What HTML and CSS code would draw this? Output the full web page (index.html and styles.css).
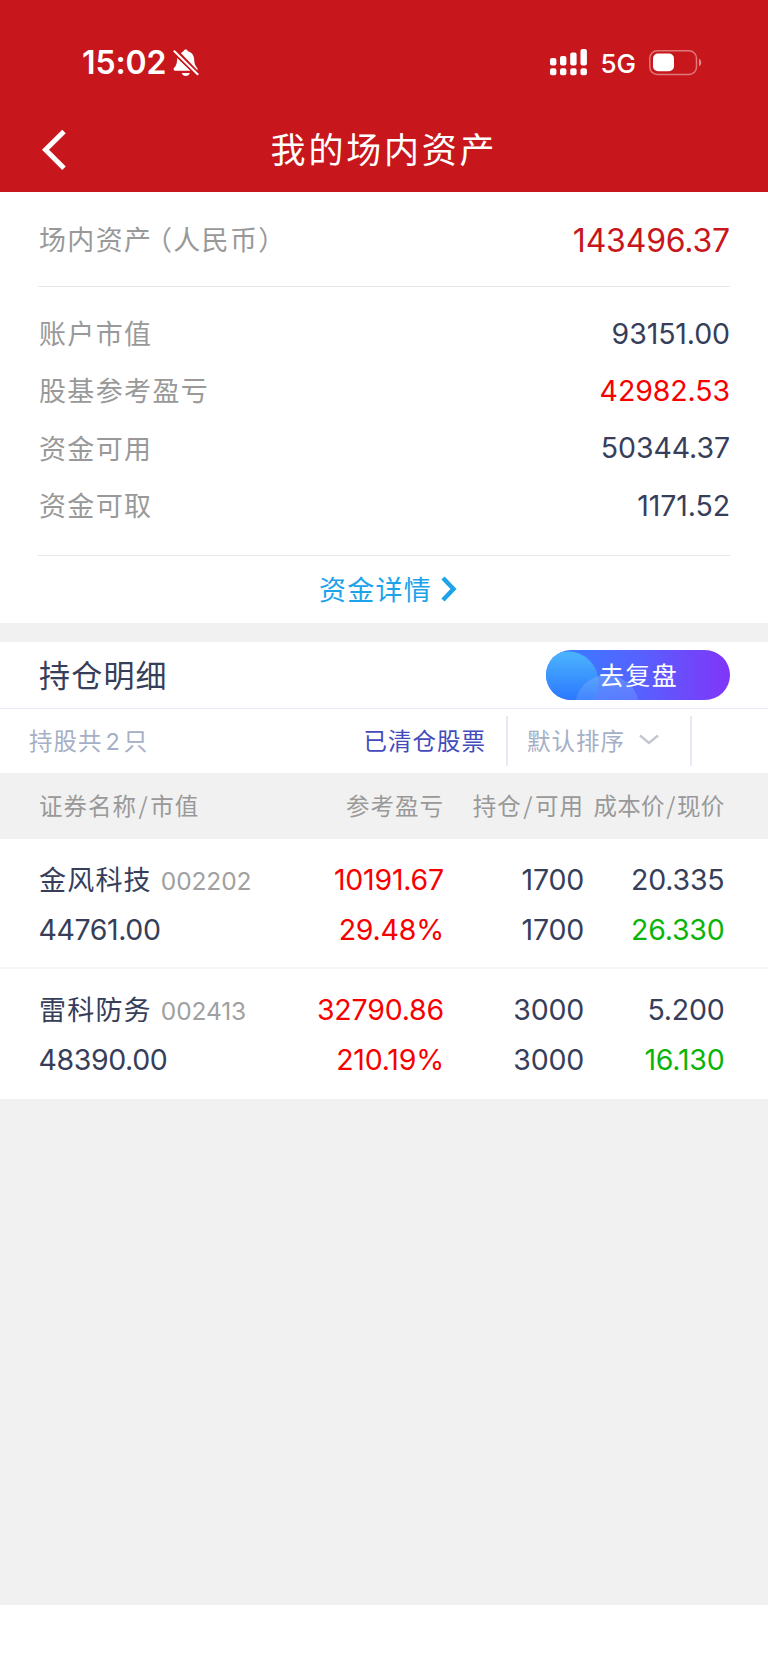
FILE: index.html
```
<!DOCTYPE html>
<html lang="zh-CN">
<head>
<meta charset="utf-8">
<title>我的场内资产</title>
<link rel="stylesheet" href="styles.css">
</head>
<body>
<header class="header">
  <div class="status">
    <span class="clock">15:02</span>
    <svg class="bell" width="26" height="28" viewBox="0 0 26 28"><path d="M8 4.2C8.8 2.8 10 2.6 10.6 2.2 11 0 14.4 0 14.8 2.2 19 3.2 21 6.500 21.200 10.500 21.300 14.500 22 16.500 24 18.800 24.700 19.600 24.700 20.700 24.300 21.300zM4.200 9 17.500 21.800H2C.2 21.800.2 19.800 1.400 18.600 3.600 16.200 4 14 4.200 9zM8.800 24H16.800C16 28 9.600 28 8.800 24z" fill="#fff"/><path d="M1.200 2.200 24.800 25.500" stroke="#c8171c" stroke-width="4.600"/><path d="M1.400 2.200 24.600 25.200" stroke="#fff" stroke-width="2" stroke-linecap="round"/></svg>
    <svg class="signal" width="38" height="27" viewBox="0 0 38 27" fill="#fff"><rect x="0" y="9" width="6.400" height="7.400" rx="2"/><rect x="10" y="7" width="6.400" height="9.400" rx="2"/><rect x="20.200" y="3.500" width="6.400" height="12.900" rx="2"/><rect x="30.500" y="0" width="6.400" height="16.400" rx="2"/><rect x="0" y="19.300" width="6.400" height="7" rx="2"/><rect x="10" y="19.300" width="6.400" height="7" rx="2"/><rect x="20.200" y="19.300" width="6.400" height="7" rx="2"/><rect x="30.500" y="19.300" width="6.400" height="7" rx="2"/></svg>
    <span class="network">5G</span>
    <svg class="battery" width="53" height="26" viewBox="0 0 53 26"><rect x=".8" y=".8" width="46.700" height="23.700" rx="7.500" fill="none" stroke="#fff" stroke-opacity=".42" stroke-width="1.500"/><rect x="4" y="3.500" width="21" height="17.700" rx="5" fill="#fff"/><path d="M50 8.700C53 10 53 15 50 16.200z" fill="#fff" fill-opacity=".5"/></svg>
  </div>
  <div class="navbar">
    <svg class="back" width="26" height="42" viewBox="0 0 26 42"><path d="M22 2.500 3.500 20.800 22 39.200" fill="none" stroke="#fff" stroke-width="5"/></svg>
    <h1 class="title">我的场内资产</h1>
  </div>
</header>
<main>
  <section class="summary">
    <div class="total"><span class="label">场内资产<span class="paren open">（</span>人民币<span class="paren">）</span></span><span class="amount">143496.37</span></div>
    <div class="figures">
      <div class="figure"><span class="label">账户市值</span><span class="num">93151.00</span></div>
      <div class="figure"><span class="label">股基参考盈亏</span><span class="num up">42982.53</span></div>
      <div class="figure"><span class="label">资金可用</span><span class="num">50344.37</span></div>
      <div class="figure"><span class="label">资金可取</span><span class="num">1171.52</span></div>
    </div>
    <a class="detail"><span>资金详情</span><svg width="16" height="26" viewBox="0 0 16 26"><path d="M2 2 12.500 13 2 24" fill="none" stroke="#1ca3ea" stroke-width="4.400"/></svg></a>
  </section>
  <section class="holdings">
    <div class="heading">
      <h2 class="subtitle">持仓明细</h2>
      <a class="review"><svg class="bubbles" width="184" height="50" viewBox="0 0 184 50"><defs><linearGradient id="a" x1="0" y1="0" x2="0" y2="1"><stop offset="0" stop-color="#4cb5fd"/><stop offset=".8" stop-color="#2b77ff"/></linearGradient><linearGradient id="b" x1="0" y1="0" x2="0" y2="1"><stop offset="0" stop-color="#79b0ff" stop-opacity=".5"/><stop offset=".5" stop-color="#6c9cff" stop-opacity=".3"/></linearGradient></defs><circle cx="22" cy="32" r="30.500" fill="url(#a)"/><circle cx="61" cy="57" r="32" fill="url(#b)"/></svg><span class="review-text">去复盘</span></a>
    </div>
    <div class="toolbar">
      <span class="count">持股共<span class="count-num">2</span>只</span>
      <a class="cleared">已清仓股票</a>
      <span class="sort"><span>默认排序</span><svg width="20" height="12" viewBox="0 0 20 12"><path d="M1 1.500 10 9 19 1.500" fill="none" stroke="#c4c7d0" stroke-width="2.400"/></svg></span>
    </div>
    <div class="row thead"><span>证券名称<i class="slash">/</i>市值</span><span>参考盈亏</span><span>持仓<i class="slash">/</i>可用</span><span class="cost">成本价<i class="slash">/</i>现价</span></div>
    <div class="row stock">
      <span class="name">金风科技<small class="code">002202</small></span><span class="up">10191.67</span><span>1700</span><span>20.335</span>
      <span>44761.00</span><span class="up">29.48%</span><span>1700</span><span class="down">26.330</span>
    </div>
    <div class="row stock">
      <span class="name">雷科防务<small class="code">002413</small></span><span class="up">32790.86</span><span>3000</span><span>5.200</span>
      <span>48390.00</span><span class="up">210.19%</span><span>3000</span><span class="down">16.130</span>
    </div>
  </section>
</main>
<footer class="home-area"></footer>
</body>
</html>
```
FILE: styles.css
```
* { box-sizing: border-box; }
body {
  margin: 0;
  height: 1670px;
  display: flex;
  flex-direction: column;
  background: #f1f1f1;
  color: #363e5a;
  font-family: "Noto Sans CJK SC", sans-serif;
  font-size: 27px;
  letter-spacing: 1.2px;
  white-space: nowrap;
}
h1, h2 { margin: 0; font-weight: 400; }
main { flex: 1; }
.header { height: 192px; background: #c8171c; color: #fff; }
.status { height: 108px; padding: 17px 66px 0 82px; display: flex; align-items: center; }
.clock { font: 600 32px/40px Inter, sans-serif; letter-spacing: -.1px; padding-top: 1px; }
.bell { margin-left: 7px; }
.signal { margin-left: auto; }
.network { margin: 2px 13px 0 12px; font: 500 26px/34px Inter, sans-serif; letter-spacing: 0; }
.navbar { height: 84px; display: grid; grid-template-columns: 60px 1fr 60px; align-items: center; }
.back { margin-left: 42px; }
.title { text-align: center; font-size: 35px; letter-spacing: 2.800px; line-height: 80px; padding-bottom: 4px; }
.summary { height: 431px; background: #fff; }
.total, .figure { display: flex; justify-content: space-between; align-items: center; }
.total { height: 95px; margin: 0 38px; border-bottom: 1px solid #e8e8e8; }
.label { color: #999; padding: 0 0 2px 1px; letter-spacing: 1.350px; }
.paren { font-feature-settings: "halt"; }
.open { margin-left: 6px; }
.amount { color: #c8171c; font: 400 32px/40px Inter, sans-serif; letter-spacing: -.2px; padding-top: 3px; }
.figures { height: 269px; margin: 0 38px; padding-top: 18px; border-bottom: 1px solid #e8e8e8; }
.figure { height: 57.300px; }
.num { font: 400 28.500px/40px Inter, sans-serif; letter-spacing: -.1px; }
.up { color: #f80000; }
.down { color: #0ab50a; }
.detail { height: 67px; display: flex; align-items: center; justify-content: center; gap: 9px; padding: 0 0 2px 8px; color: #1ca3ea; }
.holdings { margin-top: 19px; background: #fff; }
.heading { height: 67px; padding: 0 38px; display: flex; align-items: center; justify-content: space-between; border-bottom: 1px solid #e6e8f2; }
.subtitle { font-size: 31px; padding: 0 0 3px 1px; }
.review { height: 50px; width: 184px; border-radius: 25px; display: grid; place-items: center; overflow: hidden; color: #fff; background: linear-gradient(90deg, #3182ff, #5662ff 50%, #8035f8); }
.bubbles, .review-text { grid-area: 1 / 1; }
.review-text { z-index: 1; font-size: 25px; letter-spacing: 1.400px; padding: 0 0 2px 1px; }
.toolbar { height: 64px; display: flex; align-items: center; padding-left: 29px; font-size: 23.500px; letter-spacing: 1px; }
.count { color: #a5afc5; padding-bottom: 2px; }
.count-num { font-family: Inter, sans-serif; margin: 0 3px; }
.cleared { margin-left: auto; margin-right: 20px; padding-bottom: 2px; color: #434abb; }
.sort { height: 50px; width: 186px; padding: 0 0 2px 19px; margin-right: 76px; display: flex; align-items: center; gap: 14px; border: solid #e7eaf5; border-width: 0 2px; color: #a5afc5; }
.row { display: grid; grid-template-columns: 230px 175px 140px 140.500px; padding-left: 39px; text-align: right; }
.row > :nth-child(4n + 1) { text-align: left; }
.thead { height: 66px; line-height: 64px; background: #f1f1f1; color: #999; font-size: 23.500px; letter-spacing: 1px; }
.slash { font-style: normal; margin: 0 1.500px; }
.cost { letter-spacing: .2px; }
.stock { height: 130px; padding-top: 16px; grid-auto-rows: 49.500px; line-height: 49.500px; border-bottom: 2px solid #f7f7f7; font-family: Inter, "Noto Sans CJK SC", sans-serif; font-size: 28.500px; letter-spacing: -.2px; }
.stock:last-child { border: 0; }
.stock > :nth-child(5) { letter-spacing: -.4px; margin-left: -.5px; }
.stock .name { font-size: 27px; letter-spacing: 1.200px; padding-top: 1px; }
.code { margin-left: 9px; font-size: 24.500px; letter-spacing: -.1px; color: #a0a0a0; }
.home-area { height: 65px; background: #fff; }
```
